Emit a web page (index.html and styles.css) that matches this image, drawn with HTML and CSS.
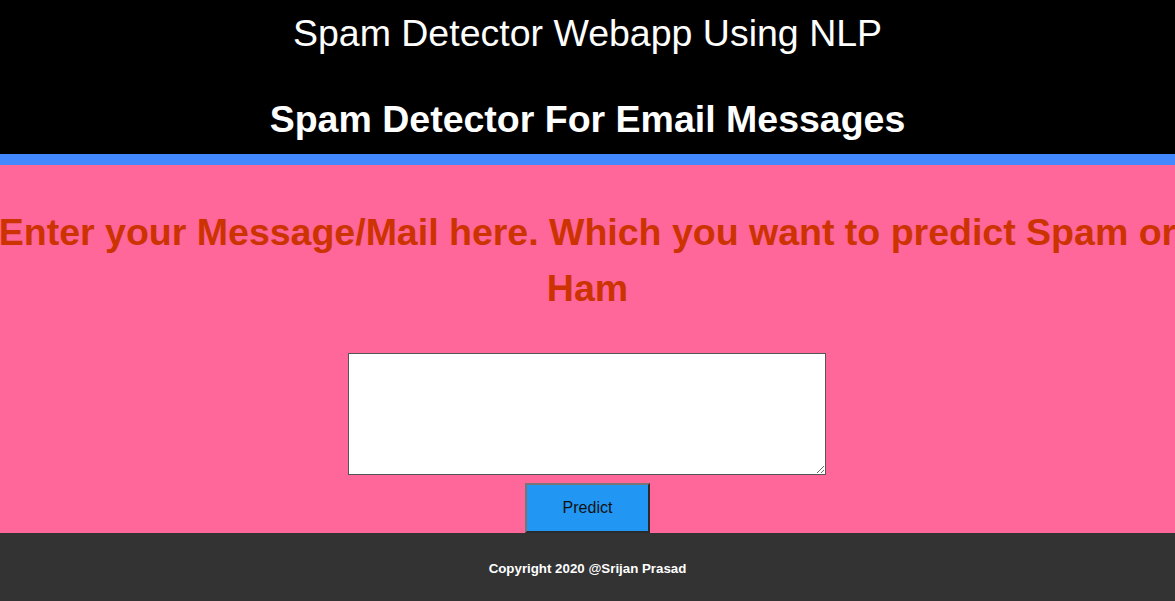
FILE: index.html
```html
<!DOCTYPE html>
<html>
<head>
<meta charset="utf-8">
<title>Spam Detector</title>
<link rel="stylesheet" href="styles.css">
</head>
<body>
<header class="header">
  <div class="brand">Spam Detector Webapp Using NLP</div>
  <h2 class="subtitle">Spam Detector For Email Messages</h2>
</header>
<div class="stripe"></div>
<main class="ml-container">
  <form class="form">
    <p class="prompt">Enter your Message/Mail here. Which you want to predict Spam or Ham</p>
    <textarea class="message" name="message"></textarea>
    <input type="submit" class="btn-info" value="Predict">
  </form>
</main>
<footer class="footer">
  <p class="copy">Copyright 2020 @Srijan Prasad</p>
</footer>
</body>
</html>
```

FILE: styles.css
```css
* { box-sizing: border-box; }
html, body { margin: 0; padding: 0; }
body {
  font-family: "Liberation Sans", Arial, sans-serif;
  background: #ff6699;
  overflow-x: hidden;
}
.header {
  background: #000;
  color: #fff;
  text-align: center;
  height: 154px;
  padding-top: 12px;
}
.brand {
  font-size: 37.5px;
  line-height: 42px;
}
.subtitle {
  margin: 44px 0 0;
  font-size: 37.5px;
  line-height: 42px;
  font-weight: bold;
}
.stripe {
  height: 11px;
  background: #4488ff;
}
.ml-container {
  background: #ff6699;
  height: 368px;
}
.form {
  display: flex;
  flex-direction: column;
  align-items: center;
  margin: 0;
}
.prompt {
  margin: 39px 0 0;
  color: #cc3300;
  font-size: 37.5px;
  font-weight: bold;
  line-height: 56px;
  text-align: center;
  width: 1200px;
}
.message {
  margin-top: 37px;
  margin-right: 1px;
  width: 478px;
  height: 122px;
  border: 1px solid #555;
  background: #fff;
}
.btn-info {
  margin-top: 8px;
  width: 125px;
  height: 50px;
  background: #2196f3;
  border: 2px solid;
  border-color: #767676 #2b2b2b #2b2b2b #767676;
  font-family: "Liberation Sans", Arial, sans-serif;
  font-size: 16px;
  color: #111;
  padding: 0;
}
.footer {
  background: #333;
  height: 68px;
  display: flex;
  align-items: center;
  justify-content: center;
  padding-top: 2px;
}
.copy {
  margin: 0;
  color: #fff;
  font-size: 13.3px;
  font-weight: bold;
}
```
